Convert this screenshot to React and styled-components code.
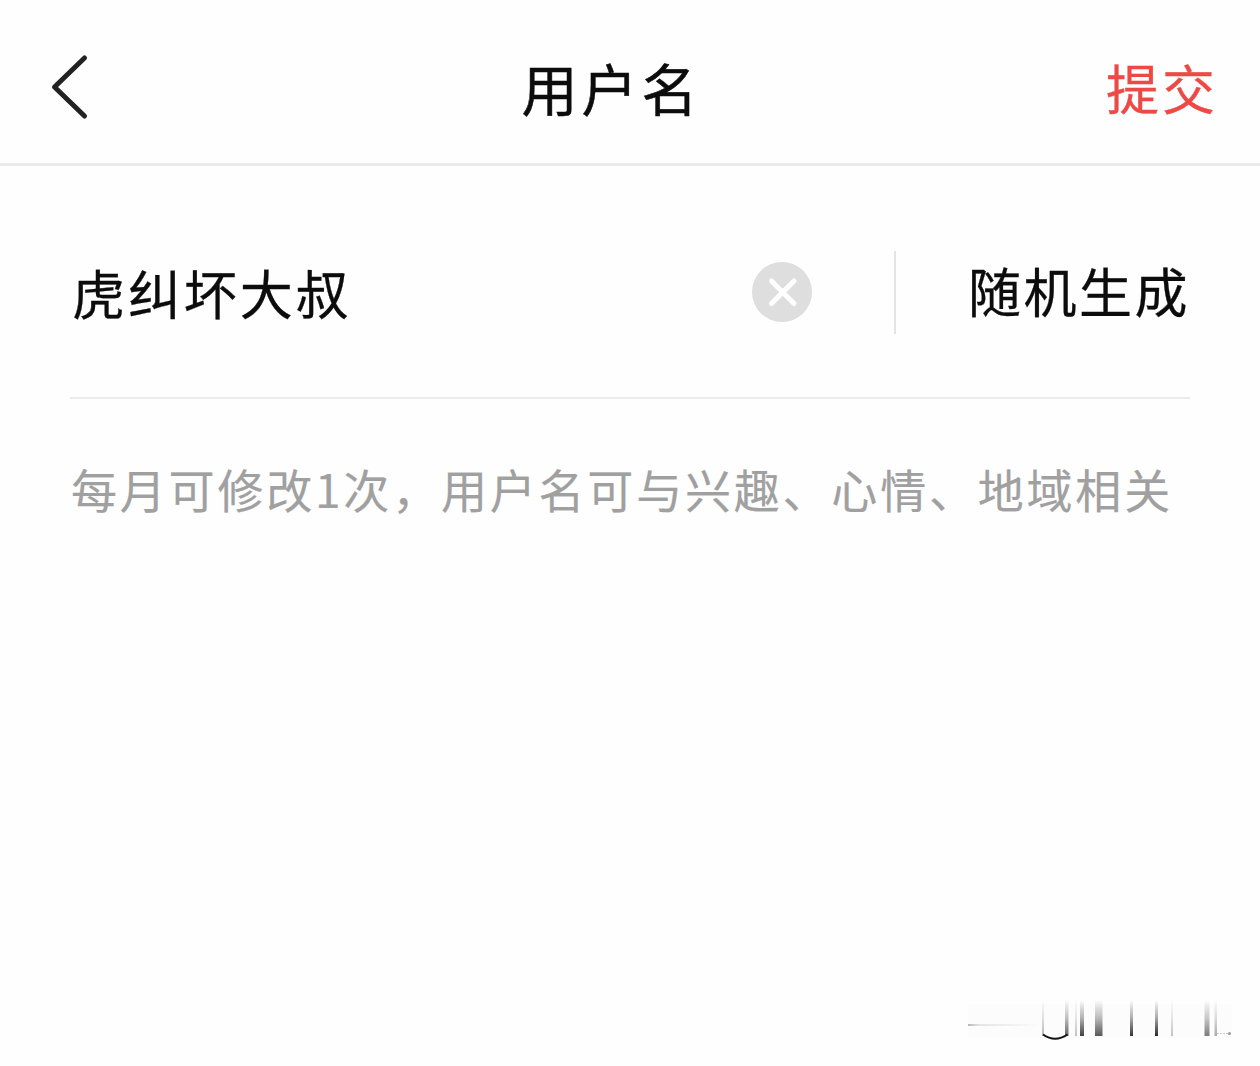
import React, { Component } from "react";
import styled, { createGlobalStyle } from "styled-components";

const GlobalStyle = createGlobalStyle`
  * {
    box-sizing: border-box;
  }
  body {
    margin: 0;
    background: #fefefe;
    font-family: "Noto Sans CJK SC", sans-serif;
  }
  button {
    padding: 0;
    border: none;
    background: none;
    font-family: inherit;
    cursor: pointer;
  }
`;

const Page = styled.div`
  width: 1260px;
  height: 1066px;
  display: flex;
  flex-direction: column;
  overflow: hidden;
  color: #0c0c0c;
`;

const Header = styled.header`
  height: 166px;
  padding: 12px 42px 0 48px;
  display: grid;
  grid-template-columns: 1fr auto 1fr;
  align-items: center;
  border-bottom: 3px solid #ebebeb;
`;

const BackButton = styled.button`
  width: 44px;
  height: 72px;
  svg {
    display: block;
  }
`;

const Title = styled.div`
  margin-right: 43px;
  padding-bottom: 2px;
  font-size: 56px;
  line-height: 80px;
  letter-spacing: 4px;
  -webkit-text-stroke: 0.5px;
`;

const TextButton = styled.button`
  justify-self: end;
  padding-bottom: ${(props) => props.lift}px;
  font-size: 53px;
  line-height: 80px;
  letter-spacing: ${(props) => props.spacing}px;
  color: ${(props) => props.color};
  -webkit-text-stroke: 0.3px;
`;

const Field = styled.div`
  height: 233px;
  margin: 0 70px;
  padding-top: 21px;
  display: flex;
  align-items: center;
  border-bottom: 2px solid #ececec;
`;

const Name = styled.div`
  flex: 1;
  padding-left: 2px;
  font-size: 53px;
  line-height: 80px;
  letter-spacing: 2.9px;
  -webkit-text-stroke: 0.3px;
`;

const ClearButton = styled.button`
  width: 60px;
  height: 60px;
  margin-right: 82px;
  svg {
    display: block;
  }
`;

const Divider = styled.div`
  width: 2px;
  height: 83px;
  margin-right: 72px;
  background: #e4e4e4;
`;

const Hint = styled.div`
  margin: 54px 70px 0 71px;
  font-size: 46px;
  line-height: 70px;
  letter-spacing: 2.8px;
  white-space: nowrap;
  color: #a0a0a0;
  -webkit-text-stroke: 0.2px;
`;

const Mark = styled.div`
  margin: auto 26px 24px auto;
  svg {
    display: block;
  }
`;

// x, width, opacity of every fading stroke
const strokes = [
  [74, 2, 0.3],
  [97, 3.5, 0.65],
  [107, 2, 0.25],
  [112, 4, 0.8],
  [127, 7.5, 0.7],
  [162, 3, 0.85],
  [187, 3, 0.9],
  [203, 2, 0.25],
  [236.5, 5, 0.55],
  [246.5, 2.5, 0.35],
];

class App extends Component {
  render() {
    return (
      <Page>
        <GlobalStyle />
        <Header>
          <BackButton aria-label="返回">
            <svg width="44" height="72" viewBox="0 0 44 72" fill="none">
              <path
                d="M36.5 6L6.5 35L36.5 64"
                stroke="#222"
                strokeWidth="5"
                strokeLinecap="round"
                strokeLinejoin="round"
              />
            </svg>
          </BackButton>
          <Title>用户名</Title>
          <TextButton lift={2} spacing={3} color="#eb4a46">
            提交
          </TextButton>
        </Header>
        <Field>
          <Name>虎纠坏大叔</Name>
          <ClearButton aria-label="清除">
            <svg width="60" height="60" viewBox="0 0 60 60">
              <circle cx="30" cy="30" r="30" fill="#dedede" />
              <path
                d="M19.5 19L42 41.5M42 19L19.5 41.5"
                stroke="#fff"
                strokeWidth="5"
                strokeLinecap="round"
              />
            </svg>
          </ClearButton>
          <Divider />
          <TextButton lift={5} spacing={2.5} color="#0c0c0c">
            随机生成
          </TextButton>
        </Field>
        <Hint>每月可修改1次，用户名可与兴趣、心情、地域相关</Hint>
        <Mark>
          <svg width="266" height="44" viewBox="0 0 266 44">
            <defs>
              <linearGradient id="fade" x1="0" y1="0" x2="0" y2="1">
                <stop offset="0" stopColor="#111" stopOpacity="0" />
                <stop offset="0.5" stopColor="#111" stopOpacity="0.4" />
                <stop offset="1" stopColor="#111" />
              </linearGradient>
              <linearGradient id="dash" x1="0" y1="0" x2="1" y2="0">
                <stop offset="0" stopColor="#888" stopOpacity="0.6" />
                <stop offset="0.15" stopColor="#888" stopOpacity="0.2" />
                <stop offset="1" stopColor="#888" stopOpacity="0" />
              </linearGradient>
            </defs>
            <rect y="6" width="264" height="34" fill="#fcfcfc" />
            <rect y="26" width="74" height="2" fill="url(#dash)" />
            {strokes.map(([x, width, opacity]) => (
              <rect
                key={x}
                x={x}
                y="2"
                width={width}
                height="36"
                fill="url(#fade)"
                opacity={opacity}
              />
            ))}
            <path
              d="M75 36.5Q87 45 99.5 36.5"
              stroke="#111"
              strokeWidth="2"
              fill="none"
            />
            <path d="M249 35.5H260" stroke="#ccc" strokeDasharray="2 1" />
            <circle cx="261.5" cy="35.5" r="1.5" fill="#999" />
          </svg>
        </Mark>
      </Page>
    );
  }
}

export default App;
